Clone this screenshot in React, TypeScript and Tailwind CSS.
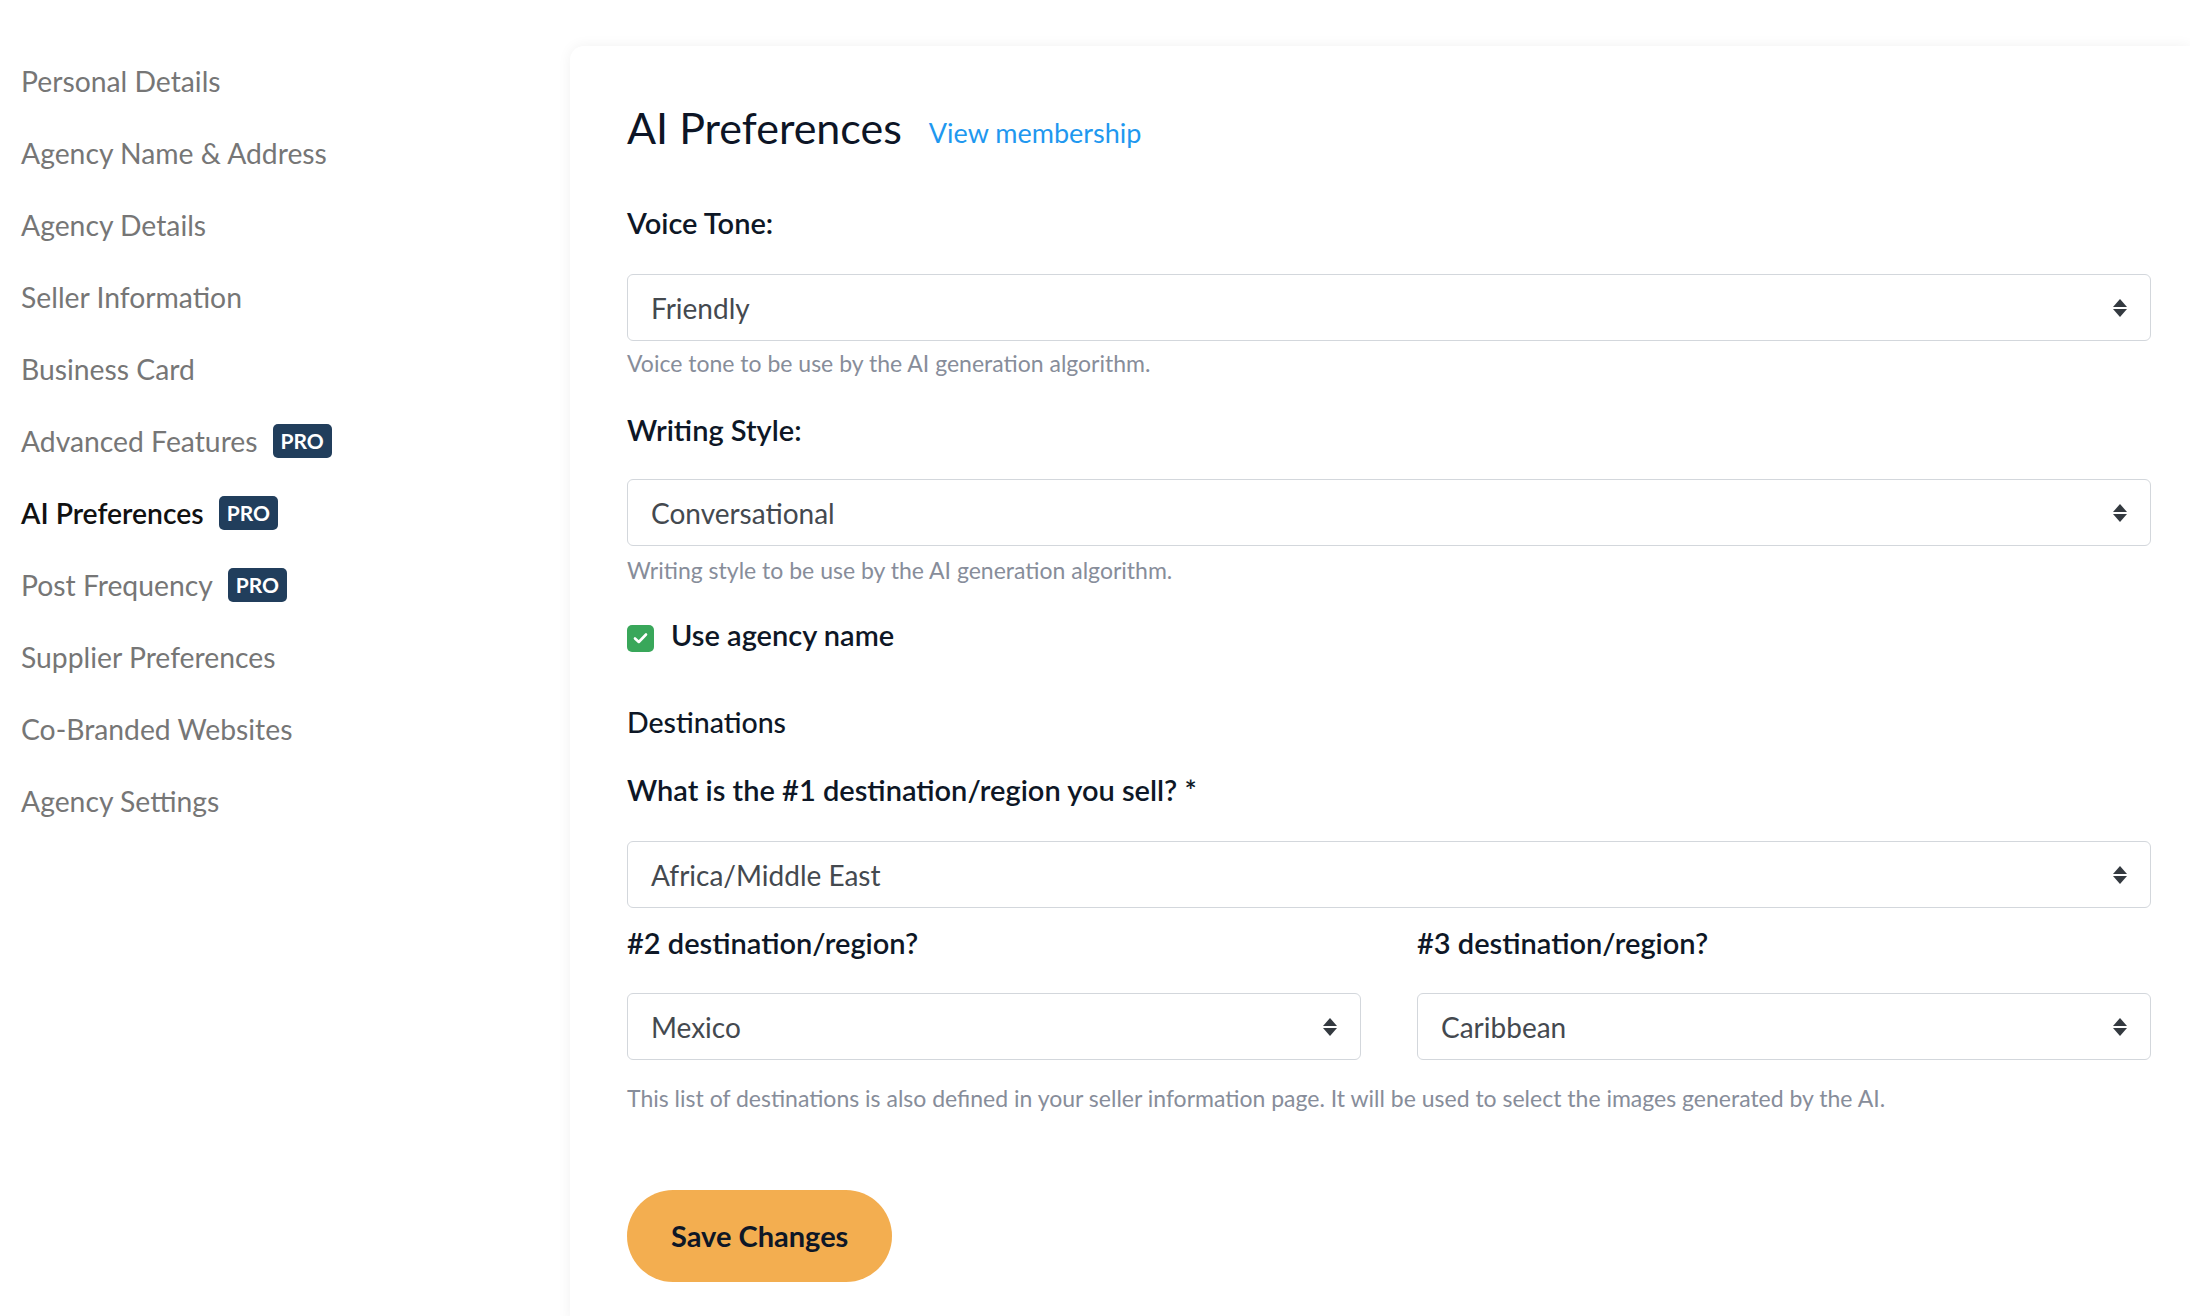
import React from "react";

const navItems: { label: string; pro?: boolean; active?: boolean }[] = [
  { label: "Personal Details" },
  { label: "Agency Name & Address" },
  { label: "Agency Details" },
  { label: "Seller Information" },
  { label: "Business Card" },
  { label: "Advanced Features", pro: true },
  { label: "AI Preferences", pro: true, active: true },
  { label: "Post Frequency", pro: true },
  { label: "Supplier Preferences" },
  { label: "Co-Branded Websites" },
  { label: "Agency Settings" },
];

function SortIcon() {
  return (
    <svg width="14" height="18" viewBox="0 0 14 18" className="shrink-0">
      <polygon points="7,0 14,8 0,8" fill="#343a40" />
      <polygon points="0,10 14,10 7,18" fill="#343a40" />
    </svg>
  );
}

function FakeSelect({ value }: { value: string }) {
  return (
    <div className="flex h-[67px] w-full items-center justify-between rounded-[6px] border border-[#d3d7dc] bg-white pl-[23px] pr-[23px] text-[28px] text-[#44494f]">
      <span>{value}</span>
      <SortIcon />
    </div>
  );
}

function Help({ children, className = "" }: { children: React.ReactNode; className?: string }) {
  return <p className={"h-[28px] text-[23px] leading-[28px] text-[#878d9a] " + className}>{children}</p>;
}

function Label({ children, className = "" }: { children: React.ReactNode; className?: string }) {
  return <p className={"h-[34px] text-[29px] font-semibold leading-[34px] text-[#0e1726] " + className}>{children}</p>;
}

export default function App() {
  return (
    <div className="flex min-h-screen bg-white font-['Lato',_sans-serif]">
      <aside className="w-[570px] shrink-0 pl-[21px] pt-[45px]">
        {navItems.map((item) => (
          <div key={item.label} className="flex h-[72px] items-center">
            <span
              className={
                "text-[28.3px] " +
                (item.active ? "font-semibold text-[#111111]" : "text-[#767676]")
              }
            >
              {item.label}
            </span>
            {item.pro && (
              <span className="ml-[15px] rounded-[5px] bg-[#213e5c] px-[8px] py-[3px] text-[21px] font-bold leading-[28px] text-white">
                PRO
              </span>
            )}
          </div>
        ))}
      </aside>

      <main className="mt-[46px] flex-1 rounded-tl-[14px] bg-white pb-[40px] pl-[57px] pr-[39px] pt-[54px] shadow-[0_0_14px_rgba(0,0,0,0.06)]">
        <div className="flex h-[56px] items-center">
          <h1 className="text-[43px] font-normal leading-[56px] text-[#0d1526]">AI Preferences</h1>
          <a href="#" className="ml-[27px] mt-[10px] text-[27px] text-[#1f98ef]">
            View membership
          </a>
        </div>

        <Label className="mt-[50px]">Voice Tone:</Label>
        <div className="mt-[34px]">
          <FakeSelect value="Friendly" />
        </div>
        <Help className="mt-[8px]">Voice tone to be use by the AI generation algorithm.</Help>

        <Label className="mt-[36px]">Writing Style:</Label>
        <div className="mt-[32px]">
          <FakeSelect value="Conversational" />
        </div>
        <Help className="mt-[10px]">Writing style to be use by the AI generation algorithm.</Help>

        <label className="mt-[34px] flex h-[34px] items-center">
          <span className="mt-[6px] flex h-[27px] w-[27px] items-center justify-center rounded-[5px] bg-[#39a75a]">
            <svg width="15" height="12" viewBox="0 0 15 12">
              <path d="M2 6.5 L5.8 10 L13 2.5" fill="none" stroke="white" strokeWidth="2.6" strokeLinecap="round" strokeLinejoin="round" />
            </svg>
          </span>
          <span className="ml-[17px] text-[29px] font-semibold text-[#0e1726]">Use agency name</span>
        </label>

        <p className="mt-[53px] h-[34px] text-[28.5px] font-medium leading-[34px] text-[#0e1726]">Destinations</p>

        <Label className="mt-[34px]">What is the #1 destination/region you sell? *</Label>
        <div className="mt-[34px]">
          <FakeSelect value="Africa/Middle East" />
        </div>

        <div className="mt-[18px] grid grid-cols-2 gap-x-[56px]">
          <div>
            <Label>#2 destination/region?</Label>
            <div className="mt-[33px]">
              <FakeSelect value="Mexico" />
            </div>
          </div>
          <div>
            <Label>#3 destination/region?</Label>
            <div className="mt-[33px]">
              <FakeSelect value="Caribbean" />
            </div>
          </div>
        </div>
        <Help className="mt-[24px]">
          This list of destinations is also defined in your seller information page. It will be used to select the images generated by the AI.
        </Help>

        <button
          type="button"
          className="mt-[78px] h-[92px] rounded-full bg-[#f3ae50] px-[44px] text-[29px] font-bold text-[#0e1726]"
        >
          Save Changes
        </button>
      </main>
    </div>
  );
}
